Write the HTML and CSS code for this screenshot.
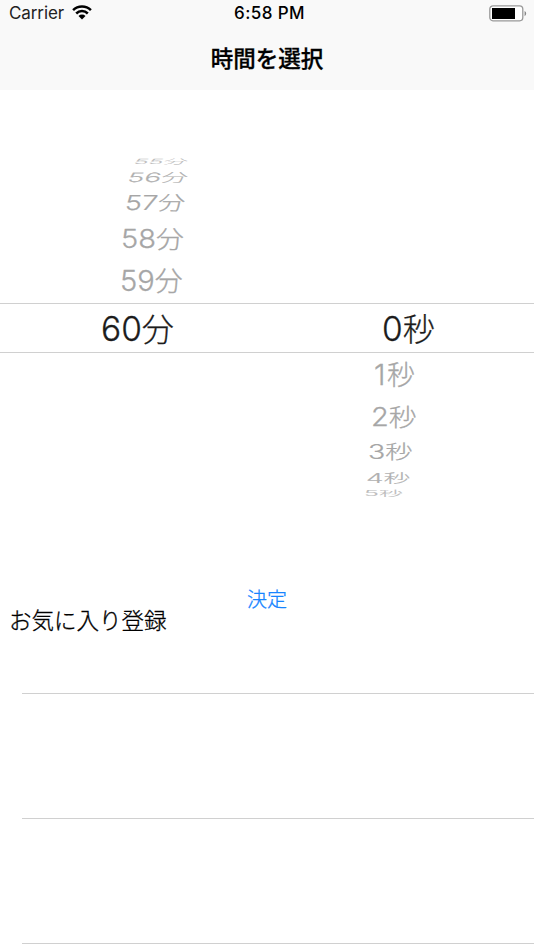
FILE: index.html
```html
<!DOCTYPE html>
<html lang="ja">
<head>
<meta charset="UTF-8">
<meta name="viewport" content="width=device-width, initial-scale=1.0">
<title>時間を選択</title>
<link rel="stylesheet" href="styles.css">
</head>
<body>
<header class="header">
    <div class="status-bar">
        <div class="carrier">
            <span>Carrier</span>
            <svg class="wifi" viewBox="0 0 20 15" width="20" height="15">
                <path d="M1.1 5.2A12.6 12.6 0 0 1 18.9 5.2M4.2 8.5A8.2 8.2 0 0 1 15.8 8.5" fill="none" stroke="#000" stroke-width="2.5"/>
                <path d="M6.5 11A5 5 0 0 1 13.5 11L10 14.5Z" fill="#000"/>
            </svg>
        </div>
        <div class="clock">6:58 PM</div>
        <svg class="battery" viewBox="0 0 38 17" width="38" height="17">
            <rect x="0.8" y="0.8" width="33" height="15" rx="3.2" fill="#fff" stroke="#999" stroke-width="1.3"/>
            <rect x="3" y="3" width="23" height="11" fill="#000"/>
            <path d="M35.6 6v5.2q1.6-.8 1.6-2.6t-1.6-2.6z" fill="#888"/>
        </svg>
    </div>
    <h1 class="title">時間を選択</h1>
</header>
<main>
    <div class="picker">
        <div class="column minutes">
            <div class="row far5"><span>55<b>分</b></span></div>
            <div class="row far4"><span>56<b>分</b></span></div>
            <div class="row far3"><span>57<b>分</b></span></div>
            <div class="row far2"><span>58<b>分</b></span></div>
            <div class="row far1"><span>59<b>分</b></span></div>
            <div class="row selected"><span>60<b>分</b></span></div>
        </div>
        <div class="column seconds">
            <div class="row selected"><span>0<b>秒</b></span></div>
            <div class="row far1"><span>1<b>秒</b></span></div>
            <div class="row far2"><span>2<b>秒</b></span></div>
            <div class="row far3"><span>3<b>秒</b></span></div>
            <div class="row far4"><span>4<b>秒</b></span></div>
            <div class="row far5"><span>5<b>秒</b></span></div>
        </div>
    </div>
    <button class="decide">決定</button>
    <h2 class="label">お気に入り登録</h2>
    <div class="favorites">
        <div class="cell"></div>
        <div class="cell"></div>
        <div class="cell last"></div>
    </div>
</main>
</body>
</html>
```
FILE: styles.css
```css
* {
    box-sizing: border-box;
}
body {
    margin: 0;
    height: 950px;
    background-color: #fff;
    color: #000;
    font-family: Inter, 'Noto Sans CJK JP', sans-serif;
}
.header {
    height: 90px;
    background-color: #f9f9f9;
}
.status-bar {
    display: grid;
    grid-template-columns: 1fr auto 1fr;
    align-items: center;
    height: 26px;
    padding: 0 7px 0 9px;
    font-size: 17px;
}
.carrier {
    display: flex;
    align-items: center;
    gap: 8px;
    color: #222;
    letter-spacing: -0.1px;
}
.wifi {
    margin-top: -2px;
}
.clock {
    padding-left: 3px;
    font-weight: 500;
    letter-spacing: 0.4px;
}
.battery {
    justify-self: end;
}
.title {
    margin: 0;
    padding-top: 17px;
    text-align: center;
    font-size: 22.5px;
    line-height: 32px;
    font-weight: 500;
    -webkit-text-stroke: 0.3px #000;
}
/* wheel picker */
.picker {
    display: grid;
    grid-template-columns: 1fr 1fr;
    height: 486px;
    padding-top: 65px;
}
.seconds {
    padding-top: 148px;
}
.row {
    display: flex;
    align-items: center;
    font-size: 28.5px;
    font-weight: 300;
    line-height: 1;
    color: #a6a6a6;
    -webkit-text-stroke: 0.3px currentColor;
}
.row span {
    display: block;
    white-space: nowrap;
    line-height: 34px;
    transform-origin: left center;
}
.row b {
    font-family: 'Noto Sans CJK JP', sans-serif;
    font-size: 0.96em;
    font-weight: 300;
    line-height: 1;
}
.selected {
    height: 50px;
    border-top: 1px solid #d0d0d0;
    border-bottom: 1px solid #d0d0d0;
    font-size: 33.5px;
    color: #1c1c1c;
}
.far1 { height: 44px; }
.far2 { height: 40px; }
.far3 { height: 32px; }
.far4 { height: 20px; color: #b0b0b0; }
.far5 { height: 12px; overflow: hidden; color: #bbb; }
.far1 span { transform: scaleX(1.02); }
.far2 span { transform: scale(1.02, 0.88); }
.far3 span { transform: scale(1, 0.72); }
.far4 span { transform: scale(0.98, 0.45); }
.far5 span { transform: scale(0.88, 0.25); }
/* the wheel leans towards the middle of the screen */
.minutes .far3 span { transform: scale(1, 0.72) skewX(-5deg); }
.minutes .far4 span { transform: scale(0.98, 0.45) skewX(-8deg); }
.minutes .far5 span { transform: scale(0.88, 0.25) skewX(-10deg); }

.minutes .selected { padding-left: 101px; }
.minutes .far1 { padding-left: 120px; }
.minutes .far2 { padding-left: 121px; }
.minutes .far3 { padding-left: 125px; }
.minutes .far4 { padding-left: 128px; }
.minutes .far5 { padding-left: 134px; }
.seconds .selected { padding-left: 115px; }
.seconds .far1 { padding-left: 107px; letter-spacing: 1.5px; }
.seconds .far2 { padding-left: 104px; }
.seconds .far3 { padding-left: 101px; }
.seconds .far4 { padding-left: 99px; }
.seconds .far5 { padding-left: 97px; }
.seconds .far3 span,
.seconds .far4 span { margin-top: -2px; }
.seconds .far5 span { margin-top: -4px; }

.decide {
    display: block;
    margin: 9px auto 0;
    padding: 0;
    border: none;
    background: none;
    color: #1785ff;
    font-family: 'Noto Sans CJK JP', sans-serif;
    font-size: 20px;
    font-weight: 300;
    line-height: 28px;
    -webkit-text-stroke: 0.3px currentColor;
}
.label {
    margin: -8px 0 0;
    padding-left: 9px;
    font-size: 22.5px;
    font-weight: 300;
    line-height: 32px;
    -webkit-text-stroke: 0.3px currentColor;
}
.favorites {
    padding: 56px 0 0 22px;
}
.cell {
    height: 125px;
    border-top: 1px solid #d0d0d0;
}
.cell.last {
    height: 6px;
}
```
